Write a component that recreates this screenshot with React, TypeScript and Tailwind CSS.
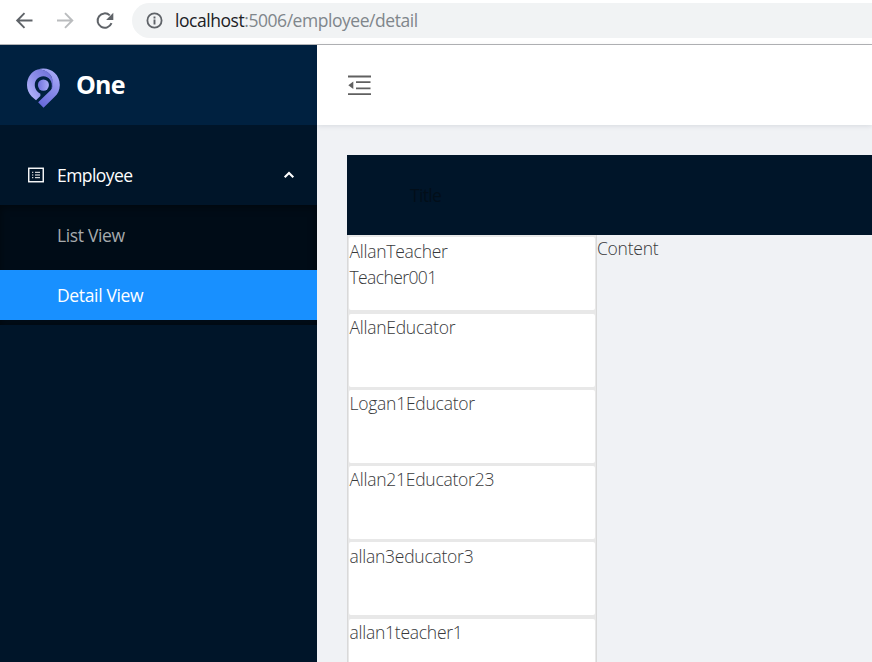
import React from "react";

const employees = [
  { lines: ["AllanTeacher", "Teacher001"], box: "mb-[4px] pt-px" },
  { lines: ["AllanEducator"], box: "mb-[3px]" },
  { lines: ["Logan1Educator"], box: "mb-[3px]" },
  { lines: ["Allan21Educator23"], box: "mb-[3px]" },
  { lines: ["allan3educator3"], box: "mb-[4px] pt-px" },
  { lines: ["allan1teacher1"], box: "" },
];

function BrowserBar() {
  return (
    <div className="flex h-[45px] shrink-0 items-start border-b border-[#b3b4b7] bg-white pt-[3px]">
      <svg width="132" height="35" viewBox="0 0 132 35" fill="none" className="shrink-0">
        <path d="M32.5 17.5H17.5M24.5 10.2L17.2 17.5L24.5 24.8" stroke="#5f6368" strokeWidth="1.9" />
        <path d="M57 17.5H72M65 10.2L72.3 17.5L65 24.8" stroke="#babcbe" strokeWidth="1.9" />
        <path d="M111.5 20.2A7.2 7.2 0 1 1 109.8 12.4" stroke="#5f6368" strokeWidth="2" />
        <path d="M113.3 9.8V17H106.1Z" fill="#5f6368" />
      </svg>
      <div className="flex h-[35px] flex-1 items-center rounded-l-full bg-[#f1f3f4] pl-[14px]">
        <svg width="17" height="17" viewBox="0 0 17 17" fill="none">
          <circle cx="8.5" cy="8.5" r="7.1" stroke="#5f6368" strokeWidth="1.8" />
          <path d="M8.5 7.5V12.5M8.5 4.6V6.4" stroke="#5f6368" strokeWidth="1.9" />
        </svg>
        <span className="ml-[12px] whitespace-nowrap text-[17.5px] tracking-[-0.45px] text-[#80868b]">
          <span className="text-[#202124]">localhost</span>:5006/employee/detail
        </span>
      </div>
    </div>
  );
}

function Logo() {
  return (
    <svg width="33" height="40" viewBox="0 0 34 40" preserveAspectRatio="none">
      <defs>
        <linearGradient id="ring" x1="0" y1="0.8" x2="0.9" y2="0.1">
          <stop offset="0" stopColor="#b3b5fb" />
          <stop offset="0.5" stopColor="#8b8de8" />
          <stop offset="1" stopColor="#7072d8" />
        </linearGradient>
        <linearGradient id="tail" x1="0.7" y1="0" x2="0.3" y2="1">
          <stop offset="0" stopColor="#aaacf9" />
          <stop offset="1" stopColor="#6668da" />
        </linearGradient>
        <linearGradient id="dot" x1="0" y1="0" x2="1" y2="0">
          <stop offset="0" stopColor="#7072df" />
          <stop offset="1" stopColor="#a9abf8" />
        </linearGradient>
      </defs>
      <path d="M11 1.5C22 -2 33.8 5 33.8 17C33.8 22 31.8 26 28.5 28.7L17 39.8L11.5 34.2L23 23.5C26 21 27 18 25.5 14C28 8 20 1 11 1.5Z" fill="url(#tail)" />
      <path d="M9.3 32.3L4.8 28.5C1.8 25.5 0 21.5 0 17C0 9 5 3.2 11 1.5C20 0.8 27.5 7 26.8 16C26.7 18 26.3 19.4 25.3 20.5C27 13.5 22.5 8.3 16.8 8.3C12 8.3 8 12 8 17.3C8 20.8 10.5 24.2 13.8 25.8V28Z" fill="url(#ring)" />
      <circle cx="16.9" cy="17.1" r="5.7" fill="url(#dot)" />
    </svg>
  );
}

function Sidebar() {
  return (
    <aside className="flex w-[317px] shrink-0 flex-col bg-[#001529] text-[17.5px]">
      <div className="flex h-[80px] items-center bg-[#002140] pl-[27px] pt-[5px]">
        <Logo />
        <span className="relative top-[-3px] ml-[16px] text-[25px] font-bold leading-none tracking-[-0.8px] text-white">One</span>
      </div>
      <div className="mt-[20px] flex h-[60px] items-center pl-[28px] pr-[22px] text-white">
        <svg width="16" height="16" viewBox="0 0 16 16" fill="none" stroke="white">
          <rect x="0.75" y="1.25" width="14.5" height="13.5" strokeWidth="1.4" />
          <path d="M4 5.3H5.3M4 8H5.3M4 10.7H5.3M7 5.3H12M7 8H12M7 10.7H12" strokeWidth="1" />
        </svg>
        <span className="ml-[13px] tracking-[-0.55px]">Employee</span>
        <svg width="12" height="10" viewBox="0 0 12 10" fill="none" className="ml-auto">
          <path d="M1.7 7.3L6 3L10.3 7.3" stroke="white" strokeWidth="2.1" />
        </svg>
      </div>
      <div className="h-[120px] bg-[#000c17] pt-[5px] shadow-[inset_0_2px_8px_rgba(0,0,0,0.45)]">
        <div className="mb-[10px] flex h-[50px] items-center pl-[57px] pt-px tracking-[-0.35px] text-[#a6aaad]">List View</div>
        <div className="flex h-[50px] items-center bg-[#1890ff] pl-[57px] pt-px tracking-[-0.35px] text-white">Detail View</div>
      </div>
    </aside>
  );
}

export default function App() {
  return (
    <div className="flex h-[662px] w-[872px] flex-col overflow-hidden font-['Open_Sans','Noto_Sans',sans-serif]">
      <BrowserBar />
      <div className="flex min-h-0 flex-1">
        <Sidebar />
        <main className="flex min-w-0 flex-1 flex-col bg-[#f0f2f5]">
          <header className="flex h-[80px] shrink-0 items-center bg-white pl-[31px] shadow-[0_1px_5px_rgba(0,21,41,0.1)]">
            <svg width="23" height="21" viewBox="0 0 23 21" fill="none" className="mt-[1px]">
              <path d="M0 1.5H23M8 7.2H22.5M8 13.3H22.5M0 19.2H23" stroke="#606060" strokeWidth="1.8" />
              <path d="M0.3 10.2L5.3 6.4V14Z" fill="#606060" />
            </svg>
          </header>
          <section className="ml-[30px] mt-[30px] flex min-h-0 flex-1 flex-col text-[17.5px] font-light leading-[26.25px] tracking-[-0.25px] text-[#38393b]">
            <div className="flex h-[80px] shrink-0 items-center bg-[#001529] pl-[63px] font-normal tracking-[-0.7px] text-[#020e19]">Title</div>
            <div className="flex min-h-0 flex-1">
              <div className="flex w-[250px] shrink-0 flex-col border-x border-[#d9d9d9] bg-[#e8e8e8] px-px pt-[2px]">
                {employees.map((e) => (
                  <div key={e.lines[0]} className={"h-[73px] shrink-0 rounded-[2px] bg-white pl-[0.5px] " + e.box}>
                    {e.lines.map((l, i) => (
                      <div key={l} className={i === 1 ? "tracking-[-0.6px]" : ""}>{l}</div>
                    ))}
                  </div>
                ))}
              </div>
              <div>Content</div>
            </div>
          </section>
        </main>
      </div>
    </div>
  );
}
